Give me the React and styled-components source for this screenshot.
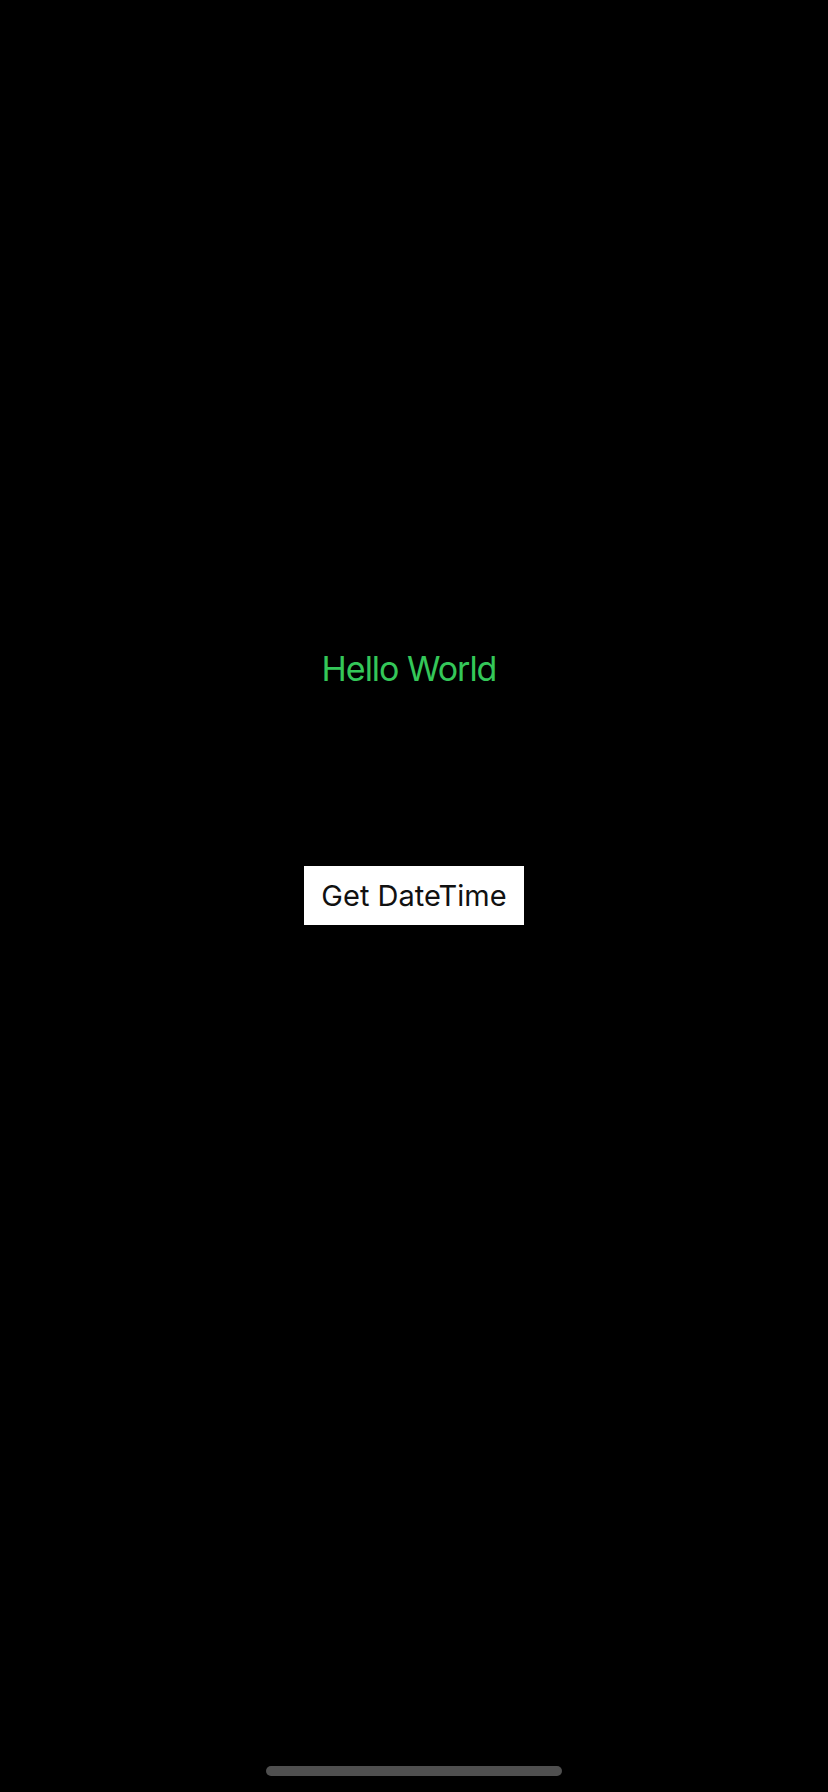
import styled, { createGlobalStyle } from "styled-components";

const GlobalStyle = createGlobalStyle`
  html, body {
    margin: 0;
    padding: 0;
    background: #000;
  }
  * {
    box-sizing: border-box;
  }
`;

const StyledScreen = styled.main`
  background-color: #000;
  width: 828px;
  height: 1792px;
  display: flex;
  flex-direction: column;
  align-items: center;
  font-family: Inter, "Noto Sans", "Liberation Sans", sans-serif;
`;

const StyledContent = styled.div`
  flex: 1;
  display: flex;
  flex-direction: column;
  align-items: center;
  padding-top: 648px;
`;

const StyledGreeting = styled.p`
  margin: 0 10px 0 0;
  color: #34c759;
  font-size: 34px;
  line-height: 41px;
  font-weight: 400;
  letter-spacing: -0.03em;
`;

const StyledButton = styled.button`
  margin-top: 177px;
  width: 220px;
  height: 59px;
  border: none;
  border-radius: 0;
  background-color: #fff;
  color: #111;
  font-family: inherit;
  font-size: 29px;
  font-weight: 400;
  cursor: pointer;
`;

const StyledHomeIndicator = styled.div`
  width: 296px;
  height: 10px;
  border-radius: 5px;
  background-color: #4f4f4f;
  margin-bottom: 16px;
`;

const App = () => {
  return (
    <>
      <GlobalStyle />
      <StyledScreen>
        <StyledContent>
          <StyledGreeting>Hello World</StyledGreeting>
          <StyledButton type="button">Get DateTime</StyledButton>
        </StyledContent>
        <StyledHomeIndicator />
      </StyledScreen>
    </>
  );
};

export default App;
